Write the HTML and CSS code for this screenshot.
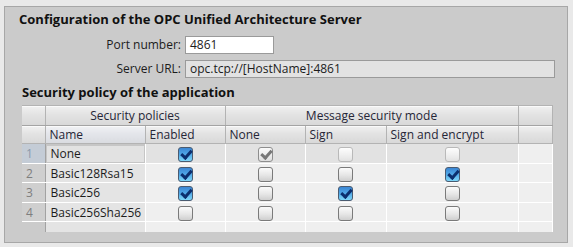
FILE: index.html
```html
<!DOCTYPE html>
<html lang="en">
<head>
  <meta charset="UTF-8">
  <title>OPC UA Server</title>
  <link rel="stylesheet" href="styles.css">
</head>
<body>

  <!-- Server configuration panel -->
  <div class="panel">
    <h2 class="section-title">Configuration of the OPC Unified Architecture Server</h2>

    <div class="fields">
      <label class="field-label">Port number:</label>
      <div class="field-box">4861</div>
      <label class="field-label">Server URL:</label>
      <div class="field-box readonly">opc.tcp://[HostName]:4861</div>
    </div>

    <h2 class="section-title sub">Security policy of the application</h2>

    <!-- Security policy table -->
    <table class="policy-table">
      <colgroup>
        <col class="c-num">
        <col class="c-name">
        <col class="c-enabled">
        <col class="c-none">
        <col class="c-sign">
        <col class="c-encrypt">
        <col class="c-rest">
      </colgroup>
      <thead>
        <tr class="group-row">
          <th class="num"></th>
          <th colspan="2">Security policies</th>
          <th colspan="3">Message security mode</th>
          <th></th>
        </tr>
        <tr class="head-row">
          <th class="num"></th>
          <th class="name-head">Name</th>
          <th>Enabled</th>
          <th>None</th>
          <th>Sign</th>
          <th>Sign and encrypt</th>
          <th></th>
        </tr>
      </thead>
      <tbody>
        <tr class="selected tall">
          <td class="num">1</td>
          <td class="name focused">None</td>
          <td class="check"><span class="cb checked"></span></td>
          <td class="check"><span class="cb disabled checked"></span></td>
          <td class="check"><span class="cb disabled"></span></td>
          <td class="check"><span class="cb disabled"></span></td>
          <td class="rest"></td>
        </tr>
        <tr>
          <td class="num">2</td>
          <td class="name">Basic128Rsa15</td>
          <td class="check"><span class="cb checked"></span></td>
          <td class="check"><span class="cb"></span></td>
          <td class="check"><span class="cb"></span></td>
          <td class="check"><span class="cb checked"></span></td>
          <td class="rest"></td>
        </tr>
        <tr class="tall">
          <td class="num">3</td>
          <td class="name">Basic256</td>
          <td class="check"><span class="cb checked"></span></td>
          <td class="check"><span class="cb"></span></td>
          <td class="check"><span class="cb checked"></span></td>
          <td class="check"><span class="cb"></span></td>
          <td class="rest"></td>
        </tr>
        <tr>
          <td class="num">4</td>
          <td class="name">Basic256Sha256</td>
          <td class="check"><span class="cb checked-no"></span></td>
          <td class="check"><span class="cb"></span></td>
          <td class="check"><span class="cb"></span></td>
          <td class="check"><span class="cb"></span></td>
          <td class="rest"></td>
        </tr>
        <tr class="empty-row">
          <td class="num blank"></td>
          <td class="name"></td>
          <td></td>
          <td></td>
          <td></td>
          <td></td>
          <td class="rest"></td>
        </tr>
      </tbody>
    </table>
  </div>

</body>
</html>
```

FILE: styles.css
```css
/* Reset */
* {
  margin: 0;
  padding: 0;
  box-sizing: border-box;
}

html, body {
  width: 100%;
  height: 100%;
  overflow: hidden;
}

body {
  background: #e9e9e9;
  font-family: 'Open Sans', 'Noto Sans', sans-serif;
  font-size: 12px;
  color: #1c1c1c;
}

/* Outer gray panel */
.panel {
  margin: 6px 5px 0 4px;
  border: 1px solid #a7a7a7;
  background: #cbcbcb;
  padding: 3px 0 10px 0;
}

/* Section headings */
.section-title {
  font-size: 13px;
  font-weight: bold;
  line-height: 18px;
  padding-left: 14px;
  color: #111;
}

.section-title.sub {
  padding-left: 17px;
  margin-top: 5px;
  margin-bottom: 4px;
}

/* Port / URL fields */
.fields {
  display: grid;
  grid-template-columns: 176px 370px;
  column-gap: 4px;
  row-gap: 6px;
  margin-top: 8px;
}

.field-label {
  text-align: right;
  line-height: 18px;
}

.field-box {
  height: 18px;
  line-height: 16px;
  border: 1px solid #9a9a9a;
  background: #ffffff;
  padding-left: 4px;
  width: 89px;
}

.field-box.readonly {
  width: 370px;
  background: #e2e2e2;
}

/* Policy table */
.policy-table {
  margin-left: 17px;
  width: 530px;
  border-collapse: collapse;
  table-layout: fixed;
}

.c-num { width: 23px; }
.c-name { width: 100px; }
.c-enabled { width: 80px; }
.c-none { width: 80px; }
.c-sign { width: 81px; }
.c-encrypt { width: 132px; }
.c-rest { width: 34px; }

.policy-table th {
  font-weight: normal;
  text-align: left;
  color: #262637;
  padding: 0 4px;
  white-space: nowrap;
  background: linear-gradient(#f0f0f0, #e2e2e2 45%, #d8d8d8);
  border: 1px solid #b3b3b3;
  box-shadow: inset 0 1px #fafafa;
}

.group-row th {
  height: 20px;
  text-align: center;
  border-bottom-color: #a4a4a4;
}

.head-row th {
  height: 18px;
}

.head-row th.name-head {
  background: linear-gradient(#f0f1f4, #e3e5ea 45%, #d9dbe0);
}

.policy-table th.num {
  border-left: none;
}

.policy-table td {
  height: 19px;
  padding: 0 5px;
  background: #efefef;
  border: 1px solid #ffffff;
  vertical-align: middle;
  white-space: nowrap;
}

.policy-table tr.tall td {
  height: 20px;
}

.policy-table td.name {
  background: #e4e4e4;
}

.policy-table td.num {
  background: #cfcfcf;
  color: #7e7e7e;
  border-left: none;
  border-right: 1px solid #a2a2a2;
  padding-left: 4px;
}

.policy-table td.check {
  text-align: center;
  padding: 0;
}

/* Selected first row */
.policy-table tr.selected td {
  background: #e2e2e2;
}

.policy-table tr.selected td.num {
  background: #c4ccd6;
  color: #8b9aab;
}

.policy-table tr.selected td.rest {
  background: #efefef;
}

.policy-table td.focused {
  box-shadow: inset 1px 2px 0 0 #c6c6c6, inset -1px -1px 0 0 #c6c6c6;
}

.empty-row td {
  height: 10px !important;
}

.policy-table .empty-row td.num {
  background: #cbcbcb;
  border-bottom: none;
}

.policy-table .empty-row td {
  border-bottom: none;
}

/* Checkboxes */
.cb {
  display: inline-block;
  position: relative;
  width: 15px;
  height: 15px;
  vertical-align: middle;
  border: 1px solid #7a7a7a;
  border-radius: 3px;
  background: linear-gradient(#fbfbfb, #e6e6e6 55%, #cfcfcf);
}

.cb.checked {
  border-color: #4a5b70;
  background: linear-gradient(#3b86d4, #4fa6e6 45%, #7fd6f8);
}

.cb.checked::after {
  content: '';
  position: absolute;
  left: 4px;
  top: 0px;
  width: 4px;
  height: 8px;
  border: solid #0c2f6e;
  border-width: 0 3px 3px 0;
  transform: rotate(42deg);
}

.cb.disabled {
  border-color: #b9b9b9;
  background: linear-gradient(#fdfdfd, #efefef 55%, #e2e2e2);
}

.cb.disabled.checked {
  border-color: #8e8e8e;
  background: linear-gradient(#fafafa, #ececec 55%, #dedede);
}

.cb.disabled.checked::after {
  border-color: #777777;
}
```
